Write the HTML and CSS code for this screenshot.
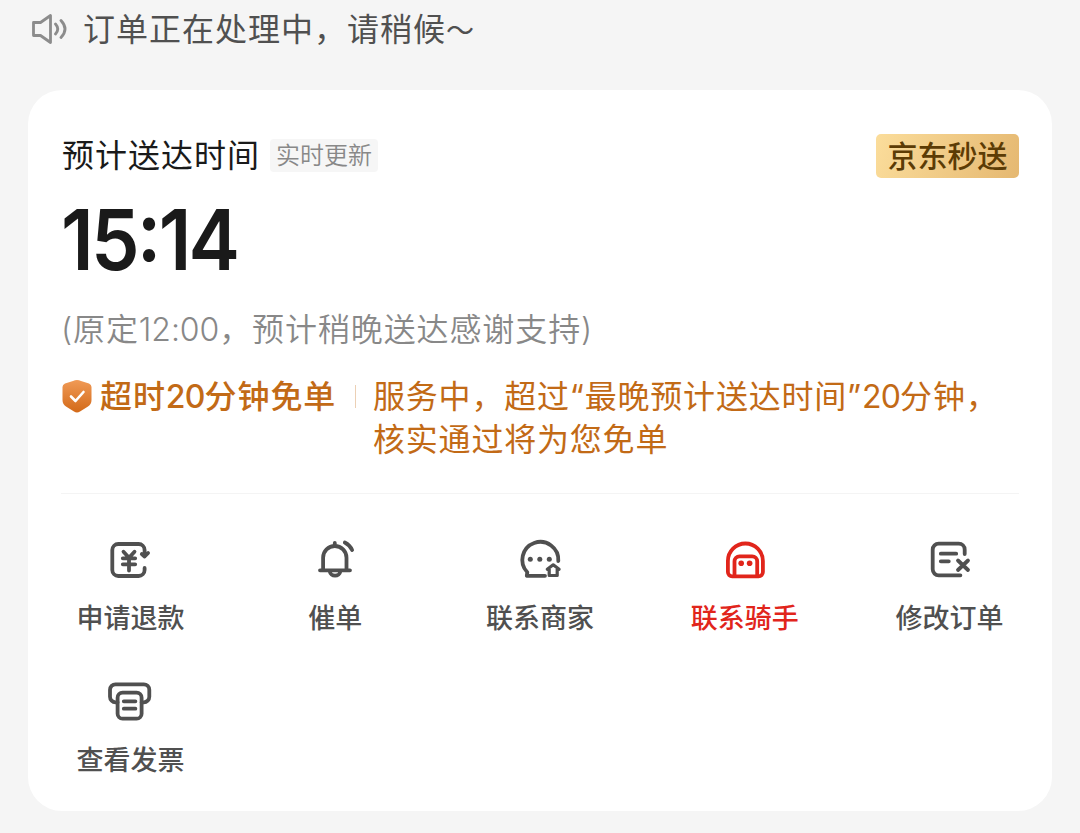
FILE: index.html
```html
<!DOCTYPE html>
<html lang="zh-CN">

<head>
    <meta charset="UTF-8">
    <meta name="viewport" content="width=device-width, initial-scale=1.0">
    <title>订单详情</title>

    <link rel="stylesheet" href="styles.css">
</head>

<body>
    <div class="notice">
        <svg class="speaker" viewBox="0 0 38 32">
            <path d="M2.500 9.500h7L19.500 2.500v27l-10-7h-7z" />
            <path d="M24.500 11q4.500 5 0 10M30 7.500q8 8.500 0 17" />
        </svg>
        <span>订单正在处理中，请稍候<span class="wave">～</span></span>
    </div>

    <div class="card">
        <div class="head">
            <span class="title">预计送达时间</span>
            <span class="tag">实时更新</span>
            <span class="badge">京东秒送</span>
        </div>
        <div class="time">15<span>:</span>14</div>
        <div class="origin">(原定<span class="num">12:00</span>，预计稍晚送达感谢支持)</div>

        <div class="promise">
            <svg class="shield" viewBox="0 0 30 34">
                <defs>
                    <linearGradient id="orange" x1="0" y1="0" x2="0" y2="1">
                        <stop offset="0" stop-color="#f09a56" />
                        <stop offset="1" stop-color="#d36a19" />
                    </linearGradient>
                </defs>
                <path fill="url(#orange)" d="M15 1q2 0 4 1l8 2.500q2.500 1 2.500 3.500v13q0 4-3.500 6.500l-8 5q-3 2-6 0l-8-5Q.5 25 .5 21V8q0-2.500 2.500-3.500L11 2q2-1 4-1z" />
                <path class="tick" d="M9 17.500l4.500 4.500 8-9" />
            </svg>
            <div class="promise-name">超时<span class="num">20</span>分钟免单</div>
            <div class="bar"></div>
            <div class="promise-text">服务中，超过“最晚预计送达时间”<span class="num">20</span>分钟，<br>核实通过将为您免单</div>
        </div>

        <div class="menu">
            <div class="item">
                <svg viewBox="0 0 48 48">
                    <path d="M38.600 32V34a6 6 0 0 1-6 6H12.300a6 6 0 0 1-6-6V14a6 6 0 0 1 6-6h20.300a6 6 0 0 1 6 6v6.500l3.500-3.500M38.600 20.500L35.800 18" />
                    <path d="M17.500 15.700l5.500 6 5.500-6M16.800 22.300h12.400M16.800 28.300h12.400M23 22v12.500" />
                </svg>
                <span>申请退款</span>
            </div>
            <div class="item">
                <svg viewBox="0 0 48 48">
                    <path d="M12.100 34V21.700a11.700 11.700 0 0 1 23.400 0V34M9 34.300h30M23.800 7V9" />
                    <path d="M18.800 35.500a5.300 4.800 0 0 0 10.500 0M33.800 6.500q5 2.500 7.300 7.500" />
                </svg>
                <span>催单</span>
            </div>
            <div class="item">
                <svg viewBox="0 0 48 48">
                    <path d="M42.300 25a18 18 0 1 0-31 11.300l-.500 3.500H29" />
                    <path class="house" d="M31.300 33.300L37.200 28.800l5.900 4.500M33.200 33v6.500h8V33" />
                    <g class="dots">
                        <circle cx="14.300" cy="23.300" r="2.500" />
                        <circle cx="23.800" cy="23.300" r="2.500" />
                        <circle cx="33.300" cy="23.300" r="2.500" />
                    </g>
                </svg>
                <span>联系商家</span>
            </div>
            <div class="item red">
                <svg viewBox="0 0 48 48">
                    <path d="M6.900 36V25a17.500 17.500 0 0 1 35 0v11a4.300 4.300 0 0 1-4.300 4.300H11.200A4.300 4.300 0 0 1 6.900 36z" />
                    <path d="M13.500 40V25.300a5 5 0 0 1 5-5h12.700a5 5 0 0 1 5 5V40" />
                    <g class="dots">
                        <circle cx="20.200" cy="27.300" r="2.800" />
                        <circle cx="28.600" cy="27.300" r="2.800" />
                    </g>
                </svg>
                <span>联系骑手</span>
            </div>
            <div class="item">
                <svg viewBox="0 0 48 48">
                    <path d="M38.700 18v-4.300a6 6 0 0 0-6-6h-20a6 6 0 0 0-6 6v19.600a6 6 0 0 0 6 6h21.700" />
                    <path d="M14.800 17.700h15.400M14.800 25.300h8M32 24.500l10 9.500M42 24.500L32 34" />
                </svg>
                <span>修改订单</span>
            </div>
            <div class="item">
                <svg viewBox="0 0 48 48">
                    <path d="M11.600 24.300H9.500a5.500 5.500 0 0 1-5.500-5.500v-7a5.500 5.500 0 0 1 5.500-5.500h28.300a5.500 5.500 0 0 1 5.500 5.500v7a5.500 5.500 0 0 1-5.500 5.500h-2.200" />
                    <rect x="11.600" y="14.700" width="24" height="26" rx="5" />
                    <path d="M17.800 23.300h11.600M17.800 30.700h11.600" />
                </svg>
                <span>查看发票</span>
            </div>
        </div>
    </div>
</body>

</html>
```

FILE: styles.css
```css
* {
    box-sizing: border-box;
}

body {
    margin: 0;
    height: 833px;
    overflow: hidden;
    background-color: #f5f5f5;
    font-family: Inter, "Noto Sans CJK SC", sans-serif;
    font-size: 32px;
    letter-spacing: 1px;
    white-space: nowrap;
}

svg {
    fill: none;
    stroke-linecap: round;
    stroke-linejoin: round;
}

.num {
    letter-spacing: 0;
}

.notice {
    height: 58px;
    padding-left: 31px;
    display: flex;
    align-items: center;
    gap: 14px;
    color: #505050;
    font-weight: 400;
}

.notice>span {
    height: 58px;
    line-height: 60px;
}

.wave {
    font-size: 28px;
}

.speaker {
    width: 38px;
    height: 32px;
    stroke: #8c8c8c;
    stroke-width: 2.8;
}

.card {
    width: 1024px;
    height: 721px;
    margin: 32px auto 0;
    padding-top: 44px;
    border-radius: 34px;
    background-color: white;
}

.head {
    height: 44px;
    padding: 0 33px;
    display: flex;
    align-items: center;
    color: #1a1a1a;
}

.title {
    height: 44px;
    padding-left: 1px;
    line-height: 43px;
}

.tag {
    height: 33px;
    margin: 0 0 1px 10px;
    padding: 0 6px;
    border-radius: 4px;
    background-color: #f6f6f6;
    color: #888;
    font-size: 24px;
    font-weight: 350;
    line-height: 34px;
    letter-spacing: 0;
}

.badge {
    width: 143px;
    height: 44px;
    margin-left: auto;
    border-radius: 5px;
    background: linear-gradient(110deg, #fbdd9b, #e5b871);
    color: #5c3c05;
    font-size: 30px;
    font-weight: 500;
    line-height: 45px;
    letter-spacing: 0;
    text-align: center;
}

.time {
    height: 123px;
    margin-left: 33px;
    color: #1a1a1a;
    font-size: 84px;
    font-weight: 600;
    line-height: 123px;
    letter-spacing: -3px;
    transform: scaleX(0.92);
    transform-origin: left;
}

.time span {
    position: relative;
    top: -9px;
}

.origin {
    height: 56px;
    padding-left: 33px;
    color: #888;
    font-weight: 350;
    line-height: 58px;
    letter-spacing: 0.9px;
}

.origin .num {
    letter-spacing: -0.1px;
}

.promise {
    height: 102px;
    margin-top: 18px;
    padding: 0 33px;
    display: flex;
    color: #c26a16;
    line-height: 43px;
    letter-spacing: 0.8px;
}

.shield {
    width: 30px;
    height: 34px;
    margin: 4px 8px 0 1px;
}

.shield .tick {
    stroke: white;
    stroke-width: 2.6;
}

.promise-name {
    width: 238px;
    font-weight: 500;
    letter-spacing: 0.9px;
}

.promise .num {
    letter-spacing: -0.8px;
}

.bar {
    width: 1px;
    height: 23px;
    margin: 10px 17px 0;
    background-color: #ecd0b5;
}

.menu {
    display: flex;
    flex-wrap: wrap;
    padding-top: 59px;
    position: relative;
}

/* divider line */
.menu::before {
    content: "";
    position: absolute;
    top: 16px;
    left: 33px;
    right: 33px;
    height: 1px;
    background-color: #f4f4f4;
}

.item {
    width: 20%;
    height: 142px;
    display: flex;
    flex-direction: column;
    align-items: center;
    color: #505050;
    font-size: 27px;
    font-weight: 500;
    line-height: 40px;
    letter-spacing: 0;
}

.item svg {
    width: 48px;
    height: 48px;
    margin-bottom: 15px;
    stroke: currentColor;
    stroke-width: 3.8;
}

.item .house {
    stroke-width: 3.2;
}

.item .dots {
    fill: currentColor;
    stroke: none;
}

.red {
    color: #e1251b;
}
```
